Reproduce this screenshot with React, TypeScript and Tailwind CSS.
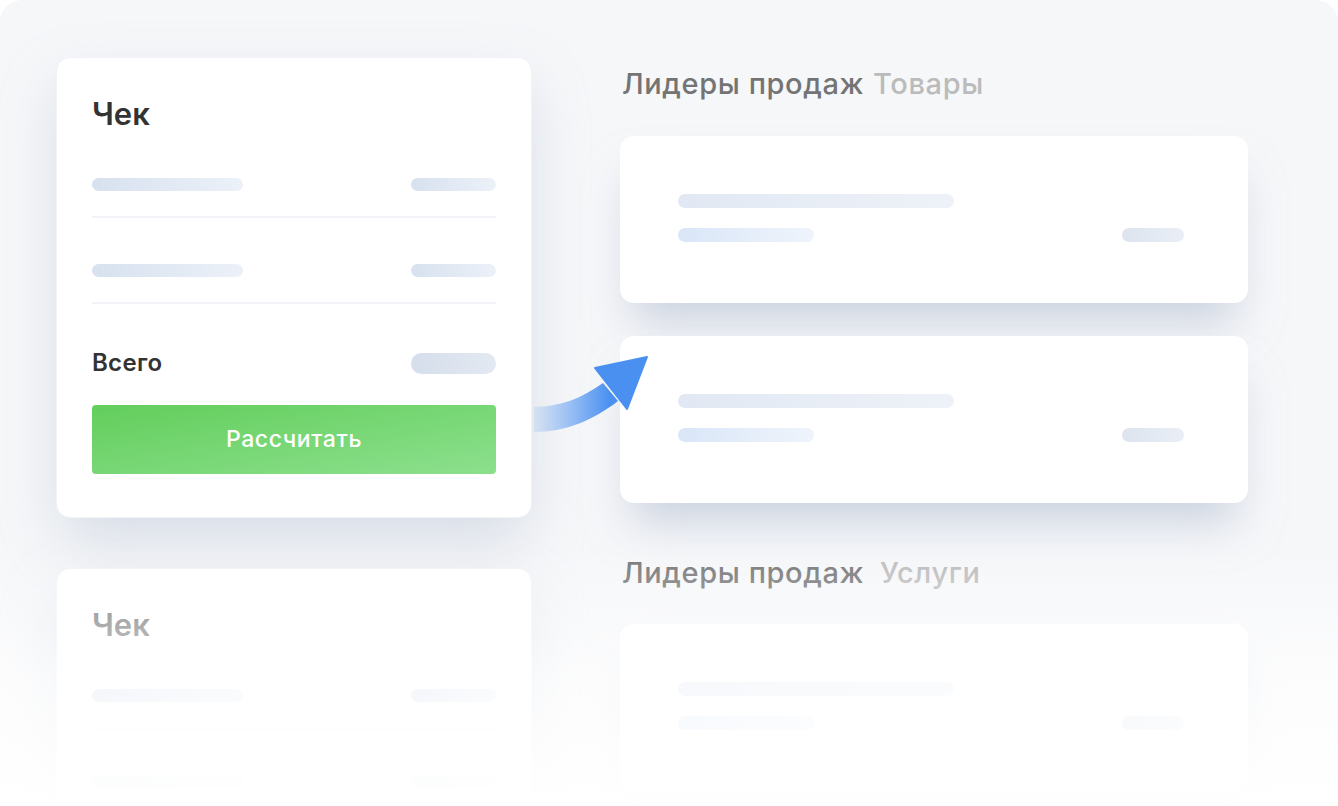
import React from 'react';

const Bar = ({ w, h = 'h-[13px]', tone = 'from-[#d7e1ef] to-[#ecf1f8]' }: { w: string; h?: string; tone?: string }) => (
  <div className={`${w} ${h} rounded-full bg-gradient-to-r ${tone}`} />
);

const CheckCard = ({ faded = false }: { faded?: boolean }) => (
  <div className="w-[476px] h-[461px] shrink-0 rounded-[14px] bg-white shadow-[0_24px_60px_-6px_rgba(170,183,205,0.45)] border border-[#f1f3f7] px-[35px] pt-[37px]">
    <h2 className={`text-[31px] leading-[38px] font-semibold ${faded ? 'text-[#6f6f6f]' : 'text-[#333]'}`}>Чек</h2>
    <div className="mt-[45px] flex items-center justify-between">
      <Bar w="w-[151px]" />
      <Bar w="w-[85px]" />
    </div>
    <div className="mt-[25px] h-[2px] bg-[#f1f3f8]" />
    <div className="mt-[46px] flex items-center justify-between">
      <Bar w="w-[151px]" />
      <Bar w="w-[85px]" />
    </div>
    <div className="mt-[25px] h-[2px] bg-[#f1f3f8]" />
    {!faded && (
      <>
        <div className="mt-[48px] flex items-center justify-between">
          <span className="text-[24px] leading-[22px] font-semibold text-[#333] tracking-[0.3px]">Всего</span>
          <Bar w="w-[85px]" h="h-[21px]" tone="from-[#d5deeb] to-[#e3e9f2]" />
        </div>
        <button className="mt-[31px] w-full h-[69px] rounded-[4px] bg-gradient-to-br from-[#62ce5b] to-[#8ce08d] text-white text-[23px] font-medium tracking-[0.6px]">
          Рассчитать
        </button>
      </>
    )}
  </div>
);

const LeaderCard = () => (
  <div className="w-[628px] h-[167px] shrink-0 rounded-[14px] bg-white shadow-[0_30px_45px_-12px_rgba(165,178,200,0.55)] pl-[58px] pr-[64px] pt-[58px]">
    <Bar w="w-[276px]" h="h-[14px]" tone="from-[#e1e8f3] to-[#eef2f8]" />
    <div className="mt-[20px] flex items-center justify-between">
      <Bar w="w-[136px]" h="h-[14px]" tone="from-[#d9e6f8] to-[#eff4fb]" />
      <Bar w="w-[62px]" h="h-[14px]" tone="from-[#dde4ef] to-[#e9eef6]" />
    </div>
  </div>
);

const Heading = ({ main, sub, gap = false }: { main: string; sub: string; gap?: boolean }) => (
  <h3 className="ml-[2px] text-[29px] leading-[32px] font-medium tracking-[0.6px]">
    <span className="text-[#747474]">{main}</span>
    <span className={`${gap ? 'ml-[16px]' : 'ml-[9px]'} text-[#bbb]`}>{sub}</span>
  </h3>
);

export default function App() {
  return (
    <div className="relative w-[1338px] h-[806px] overflow-hidden bg-white" style={{ fontFamily: 'Inter, "Noto Sans", sans-serif' }}>
      <div className="h-full rounded-[22px] bg-[#f6f7f9] flex pl-[56px] pt-[57px]">
        <div className="flex flex-col gap-[50px]">
          <CheckCard />
          <CheckCard faded />
        </div>
        <div className="ml-[88px] pt-[11px] flex flex-col">
          <Heading main="Лидеры продаж" sub="Товары" />
          <div className="mt-[36px]">
            <LeaderCard />
          </div>
          <div className="mt-[33px]">
            <LeaderCard />
          </div>
          <div className="mt-[54px]">
            <Heading main="Лидеры продаж" sub="Услуги" gap />
          </div>
          <div className="mt-[35px]">
            <LeaderCard />
          </div>
        </div>
      </div>

      <svg className="absolute left-[532px] top-[350px]" width="124" height="90" viewBox="532 350 124 90">
        <defs>
          <linearGradient id="shaft" x1="534" y1="0" x2="610" y2="0" gradientUnits="userSpaceOnUse">
            <stop offset="0" stopColor="#4a90f0" stopOpacity="0.12" />
            <stop offset="1" stopColor="#4a90f0" />
          </linearGradient>
        </defs>
        <path d="M534 407 C 560 407, 582 398, 603 383 L 618 401 C 592 421, 565 432, 534 432 Z" fill="url(#shaft)" />
        <path d="M595 368 L 647 357 L 627 409 Z" fill="#4a90f0" strokeLinejoin="round" stroke="#4a90f0" strokeWidth="2" />
      </svg>

      <div className="pointer-events-none absolute left-0 right-0 bottom-0 h-[260px] bg-gradient-to-b from-white/0 via-white/70 to-white" />
    </div>
  );
}
